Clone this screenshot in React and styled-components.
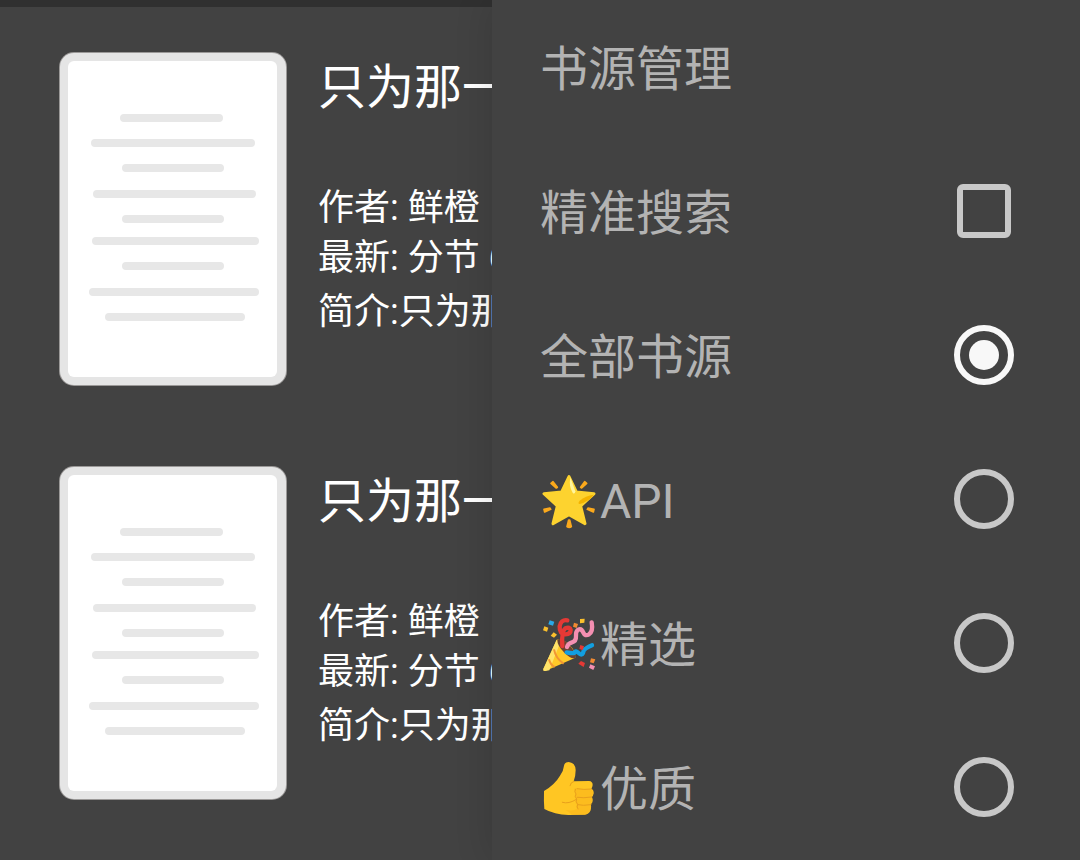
import React, { useState } from "react";
import styled, { createGlobalStyle } from "styled-components";

const GlobalStyle = createGlobalStyle`
  :root {
    --surface: #424242;
    --status: #303030;
    --text: #ffffff;
    --muted: #b3b3b3;
    --control: #c8c8c8;
    --active: #f8f8f8;
  }
  * {
    box-sizing: border-box;
  }
  body {
    margin: 0;
    background: var(--surface);
    font-family: Roboto, "Noto Sans CJK SC", sans-serif;
  }
`;

const PageStyled = styled.div`
  display: grid;
  grid-template-columns: minmax(0, 1fr) 588px;
  height: 100vh;
  overflow: hidden;
`;

const ResultsStyled = styled.main`
  overflow: hidden;
  border-top: 7px solid var(--status);
  color: var(--text);
`;

const BookList = styled.ul`
  display: flex;
  flex-direction: column;
  gap: 80px;
  margin: 0;
  padding: 45px 0 45px 59px;
  list-style: none;
`;

const BookStyled = styled.li`
  display: flex;
  gap: 31px;
  .cover {
    flex: none;
    width: 228px;
    height: 334px;
  }
`;

const BookInfo = styled.div`
  flex: 1;
  min-width: 0;
  padding-top: 4px;
  overflow: hidden;
  white-space: nowrap;
  h2 {
    margin: 0 0 63px;
    font-size: 48px;
    font-weight: 400;
    line-height: 64px;
  }
  p {
    margin: 0;
    font-size: 36px;
    line-height: 50px;
  }
  .intro {
    margin-top: 4px;
  }
`;

const MenuStyled = styled.nav`
  position: relative;
  background: var(--surface);
  box-shadow: 0 0 36px rgba(0, 0, 0, 0.14);
  ul {
    margin: -5px 0 0;
    padding: 0;
    list-style: none;
  }
`;

const rowStyles = `
  display: flex;
  align-items: center;
  justify-content: space-between;
  width: 100%;
  height: 144px;
  padding: 0 66px 0 48px;
  color: var(--muted);
  font-size: 48px;
  cursor: pointer;
`;

const MenuButton = styled.button`
  ${rowStyles}
  border: 0;
  background: none;
  font-family: inherit;
  text-align: left;
`;

const MenuLabel = styled.label`
  ${rowStyles}
`;

const Caption = styled.span`
  display: flex;
  align-items: center;
  padding-top: 6px;
  line-height: 60px;
  svg {
    width: 60px;
    height: 60px;
  }
`;

const Checkbox = styled.input`
  appearance: none;
  width: 54px;
  height: 54px;
  margin: 0 3px;
  border: 6px solid var(--control);
  border-radius: 6px;
  &:checked {
    background: var(--active);
    background-clip: content-box;
    padding: 6px;
  }
`;

const Radio = styled.input`
  appearance: none;
  display: grid;
  place-items: center;
  width: 60px;
  height: 60px;
  margin: 0;
  border: 6px solid var(--control);
  border-radius: 50%;
  &:checked {
    border-color: var(--active);
  }
  &:checked::before {
    content: "";
    width: 30px;
    height: 30px;
    border-radius: 50%;
    background: var(--active);
  }
`;

// [x, y, width] of every text line on the cover
const coverLines = [
  [61, 62, 103],
  [32, 87, 164],
  [63, 112, 102],
  [34, 138, 163],
  [63, 163, 102],
  [33, 185, 167],
  [63, 210, 102],
  [30, 236, 170],
  [46, 261, 140],
];

const Cover = () => (
  <svg className="cover" viewBox="0 0 228 334" aria-hidden="true">
    <rect width="228" height="334" rx="15" fill="#9b9998" />
    <rect x="1" y="1" width="226" height="332" rx="14" fill="#e5e5e5" />
    <rect x="9" y="9" width="209" height="316" rx="6" fill="#fff" />
    {coverLines.map(([x, y, width]) => (
      <rect key={y} x={x} y={y} width={width} height="8" rx="4" fill="#e7e7e7" />
    ))}
  </svg>
);

const Star = () => (
  <svg viewBox="33 36 180 180" aria-hidden="true">
    <g fill="#fba91c" stroke="#fba91c" strokeWidth="5" strokeLinejoin="round">
      <path d="M66 70l6-5 13 17-3 2z" />
      <path d="M173 70l-6-5-12 17 3 2z" />
      <path d="M45 148l2 8 18-8-2-4z" />
      <path d="M195 148l-2 8-18-8 2-4z" />
      <path d="M119 180h3l5 20q-6 5-13 0z" />
    </g>
    <path
      d="M120 50l22 46 53 5-40 37 13 53-48-27-48 27 13-53-40-37 53-5z"
      fill="#fdd32f"
      stroke="#fdd32f"
      strokeWidth="9"
      strokeLinejoin="round"
    />
    <path d="M124 52l15 42q-2 11-8 4-12-18-7-46z" fill="#fff59d" />
    <path d="M194 104q-13 20-42 28-7-2 0-10 18-15 42-18z" fill="#f4b400" />
  </svg>
);

const Party = () => (
  <svg viewBox="33 48 180 180" aria-hidden="true">
    <path d="M43 207l40-88q14-5 36 14 22 20 20 40l-90 40q-8 1-6-6z" fill="#ffc928" />
    <path d="M43 207l40-88 8 15-30 77-12 2q-8 1-6-6z" fill="#ffe36a" />
    <path
      d="M75 148q5 27 29 43M60 178q4 17 17 23"
      fill="none"
      stroke="#f19534"
      strokeWidth="6"
    />
    <path d="M85 119q11-8 34 14 23 24 20 40-10 7-32-14-23-23-22-40z" fill="#6b4332" />
    <g fill="none" strokeWidth="13" strokeLinecap="round" strokeLinejoin="round">
      <path
        d="M115 61q-20-3-23 18-1 24 17 24 16-1 16-13-2-10-16-5-12 9-9 53"
        stroke="#e53935"
      />
      <path
        d="M188 67q5 27-8 36-12 7-17-5-5-13-16-9-7 5-6 18 1 17-12 20-12 3-15 14"
        stroke="#f48fb1"
      />
      <path d="M113 157q23 5 24 0 2-7 12 2 9 9 13 0 1-13 27-23" stroke="#129fe0" />
    </g>
    <g fill="#fbc02d">
      <path d="M46 79l12 4-4 12-12-4z" />
      <path d="M74 97l10 7-9 9-10-6z" />
      <path d="M153 57l14-1-1 12-13 2z" />
    </g>
    <g fill="#f18a32">
      <path d="M135 68l12 4-4 12-11-4z" />
      <path d="M186 175l13 3-5 12-11-3z" />
    </g>
    <g fill="#e53935">
      <path d="M154 135l11 4-4 12-10-5z" />
      <path d="M156 183l12 6-4 12-16-10z" />
    </g>
    <path d="M62 61l14 4-4 12-14-4z" fill="#29a9e8" />
    <path d="M184 193l14 6-5 11-13-7z" fill="#f48fb1" />
  </svg>
);

const Thumb = () => (
  <svg viewBox="33 30 180 180" aria-hidden="true">
    <path
      d="M45 123q33-20 48-46 11-16 12-30 2-11 14-11 20 2 21 24 0 18-6 34l46-1q11 1 11 12-1 8-4 11 8 4 7 14-1 8-6 11 4 5 3 12-1 8-6 10 2 5 1 12-3 18-18 19l-50 1q-42-1-72-18-2-24-1-50z"
      fill="#ffc623"
    />
    <path
      d="M188 118q-27 2-45-1-8-8-7 5l4 9q-7 9 1 16-5 10 2 16-3 8 1 14-10 7-34 3l20 14h38q15-1 18-19 1-7-1-12 8-11 3-22 10-10 0-23z"
      fill="#fab61b"
      opacity=".6"
    />
    <path
      d="M135 94q-11 3-12 13M188 117q-25 3-44-1M189 141q-27 4-44 1M186 164q-25 4-40 0M139 118q-4 8 2 14-5 8 2 15-4 9 3 16-4 8 1 14M142 148q-22 15-42 9"
      fill="none"
      stroke="#e8a01c"
      strokeWidth="3"
      strokeLinecap="round"
    />
  </svg>
);

const books = [
  { id: 1, title: "只为那一", author: "鲜橙", latest: "分节 6", intro: "只为那" },
  { id: 2, title: "只为那一", author: "鲜橙", latest: "分节 6", intro: "只为那" },
];

const sources = [
  { id: "all", name: "全部书源" },
  { id: "api", name: "API", Icon: Star },
  { id: "picked", name: "精选", Icon: Party },
  { id: "quality", name: "优质", Icon: Thumb },
];

const Book = ({ title, author, latest, intro }) => {
  return (
    <BookStyled>
      <Cover />
      <BookInfo>
        <h2>{title}</h2>
        <p>作者: {author}</p>
        <p>最新: {latest}</p>
        <p className="intro">简介:{intro}</p>
      </BookInfo>
    </BookStyled>
  );
};

const App = () => {
  const [precise, setPrecise] = useState(false);
  const [source, setSource] = useState("all");

  return (
    <PageStyled>
      <GlobalStyle />
      <ResultsStyled>
        <BookList>
          {books.map((book) => (
            <Book key={book.id} {...book} />
          ))}
        </BookList>
      </ResultsStyled>
      <MenuStyled>
        <ul>
          <li>
            <MenuButton type="button">
              <Caption>书源管理</Caption>
            </MenuButton>
          </li>
          <li>
            <MenuLabel htmlFor="precise">
              <Caption>精准搜索</Caption>
              <Checkbox
                id="precise"
                type="checkbox"
                checked={precise}
                onChange={(e) => setPrecise(e.target.checked)}
              />
            </MenuLabel>
          </li>
          {sources.map(({ id, name, Icon }) => (
            <li key={id}>
              <MenuLabel htmlFor={id}>
                <Caption>
                  {Icon && <Icon />}
                  {name}
                </Caption>
                <Radio
                  id={id}
                  type="radio"
                  name="source"
                  checked={source === id}
                  onChange={() => setSource(id)}
                />
              </MenuLabel>
            </li>
          ))}
        </ul>
      </MenuStyled>
    </PageStyled>
  );
};

export default App;
